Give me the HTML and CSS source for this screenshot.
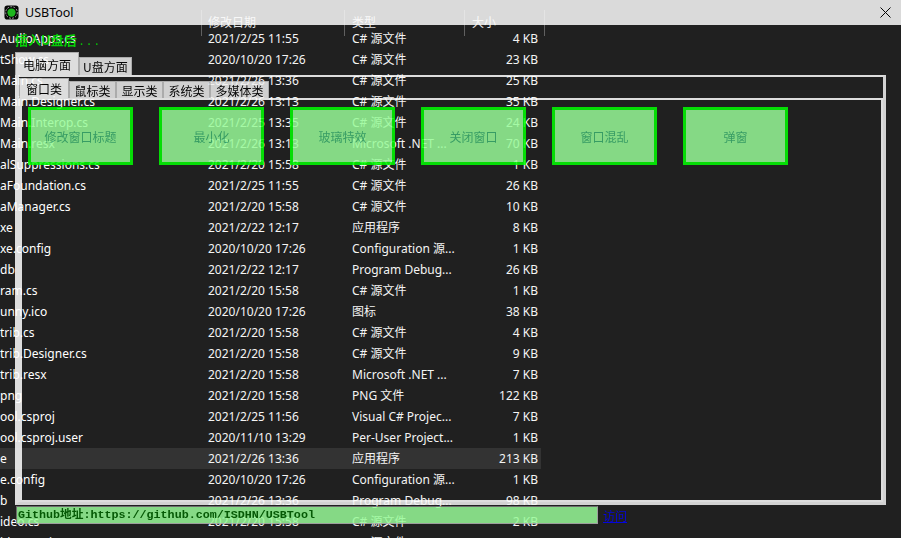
FILE: index.html
```html
<!DOCTYPE html>
<html lang="zh-CN">
<head>
<meta charset="utf-8">
<title>USBTool</title>
<link rel="stylesheet" href="styles.css">
</head>
<body>
<div class="explorer">
  <div class="head">
    <div class="hc"></div>
    <div class="hc">修改日期</div>
    <div class="hc ty">类型</div>
    <div class="hc ty">大小</div>
  </div>
  <div class="row"><span class="n">AudioApps.cs</span><span class="d">2021/2/25 11:55</span><span class="t">C# 源文件</span><span class="s">4 KB</span></div>
  <div class="row"><span class="n">tShow.cs</span><span class="d">2020/10/20 17:26</span><span class="t">C# 源文件</span><span class="s">23 KB</span></div>
  <div class="row"><span class="n">Main.cs</span><span class="d">2021/2/26 13:36</span><span class="t">C# 源文件</span><span class="s">25 KB</span></div>
  <div class="row"><span class="n">Main.Designer.cs</span><span class="d">2021/2/26 13:13</span><span class="t">C# 源文件</span><span class="s">35 KB</span></div>
  <div class="row"><span class="n">Main.Interop.cs</span><span class="d">2021/2/25 13:35</span><span class="t">C# 源文件</span><span class="s">24 KB</span></div>
  <div class="row"><span class="n">Main.resx</span><span class="d">2021/2/26 13:13</span><span class="t">Microsoft .NET ...</span><span class="s">70 KB</span></div>
  <div class="row"><span class="n">alSuppressions.cs</span><span class="d">2021/2/20 15:58</span><span class="t">C# 源文件</span><span class="s">1 KB</span></div>
  <div class="row"><span class="n">aFoundation.cs</span><span class="d">2021/2/25 11:55</span><span class="t">C# 源文件</span><span class="s">26 KB</span></div>
  <div class="row"><span class="n">aManager.cs</span><span class="d">2021/2/20 15:58</span><span class="t">C# 源文件</span><span class="s">10 KB</span></div>
  <div class="row"><span class="n">xe</span><span class="d">2021/2/22 12:17</span><span class="t">应用程序</span><span class="s">8 KB</span></div>
  <div class="row"><span class="n">xe.config</span><span class="d">2020/10/20 17:26</span><span class="t">Configuration 源...</span><span class="s">1 KB</span></div>
  <div class="row"><span class="n">db</span><span class="d">2021/2/22 12:17</span><span class="t">Program Debug...</span><span class="s">26 KB</span></div>
  <div class="row"><span class="n">ram.cs</span><span class="d">2021/2/20 15:58</span><span class="t">C# 源文件</span><span class="s">1 KB</span></div>
  <div class="row"><span class="n">unny.ico</span><span class="d">2020/10/20 17:26</span><span class="t">图标</span><span class="s">38 KB</span></div>
  <div class="row"><span class="n">trib.cs</span><span class="d">2021/2/20 15:58</span><span class="t">C# 源文件</span><span class="s">4 KB</span></div>
  <div class="row"><span class="n">trib.Designer.cs</span><span class="d">2021/2/20 15:58</span><span class="t">C# 源文件</span><span class="s">9 KB</span></div>
  <div class="row"><span class="n">trib.resx</span><span class="d">2021/2/20 15:58</span><span class="t">Microsoft .NET ...</span><span class="s">7 KB</span></div>
  <div class="row"><span class="n">png</span><span class="d">2021/2/20 15:58</span><span class="t">PNG 文件</span><span class="s">122 KB</span></div>
  <div class="row"><span class="n">ool.csproj</span><span class="d">2021/2/25 11:56</span><span class="t">Visual C# Projec...</span><span class="s">7 KB</span></div>
  <div class="row"><span class="n">ool.csproj.user</span><span class="d">2020/11/10 13:29</span><span class="t">Per-User Project...</span><span class="s">1 KB</span></div>
  <div class="row hl"><span class="n">e</span><span class="d">2021/2/26 13:36</span><span class="t">应用程序</span><span class="s">213 KB</span></div>
  <div class="row"><span class="n">e.config</span><span class="d">2020/10/20 17:26</span><span class="t">Configuration 源...</span><span class="s">1 KB</span></div>
  <div class="row"><span class="n">b</span><span class="d">2021/2/26 13:36</span><span class="t">Program Debug...</span><span class="s">98 KB</span></div>
  <div class="row"><span class="n">ideo.cs</span><span class="d">2021/2/20 15:58</span><span class="t">C# 源文件</span><span class="s">2 KB</span></div>
  <div class="row"><span class="n">ideo.Designer.cs</span><span class="d">2021/2/20 15:58</span><span class="t">C# 源文件</span><span class="s">5 KB</span></div>
</div>

<div class="app">
  <div class="titlebar">
    <svg class="appicon" viewBox="0 0 16 16" aria-hidden="true">
      <rect x="0.5" y="0.5" width="15" height="15" rx="3" fill="#000"/>
      <circle cx="8" cy="8" r="6.2" fill="none" stroke="#d0d0d0" stroke-width="1" stroke-dasharray="2 1.4"/>
      <circle cx="8" cy="8" r="4.4" fill="#1ed21e"/>
    </svg>
    <span class="title">USBTool</span>
    <svg class="close" viewBox="0 0 11 11" aria-hidden="true">
      <path d="M0.5 0.5 L10.5 10.5 M10.5 0.5 L0.5 10.5" stroke="#000" stroke-width="1" fill="none"/>
    </svg>
  </div>
  <div class="hint">插入U盘后<span class="dots">...</span></div>
  <div class="tabctl outer">
    <div class="strip">
      <div class="tab sel">电脑方面</div>
      <div class="tab">U盘方面</div>
    </div>
    <div class="frame">
      <div class="tabctl inner">
        <div class="strip">
          <div class="tab sel">窗口类</div>
          <div class="tab">鼠标类</div>
          <div class="tab">显示类</div>
          <div class="tab">系统类</div>
          <div class="tab">多媒体类</div>
        </div>
        <div class="frame">
          <div class="btns">
            <button class="btn">修改窗口标题</button>
            <button class="btn">最小化</button>
            <button class="btn">玻璃特效</button>
            <button class="btn">关闭窗口</button>
            <button class="btn">窗口混乱</button>
            <button class="btn">弹窗</button>
          </div>
        </div>
      </div>
    </div>
  </div>
  <div class="linkrow">
    <div class="url">Github地址:https://github.com/ISDHN/USBTool</div>
    <a class="visit" href="#">访问</a>
  </div>
</div>
</body>
</html>
```

FILE: styles.css
```css
html, body {
  margin: 0;
  padding: 0;
}

body {
  width: 901px;
  height: 538px;
  overflow: hidden;
  position: relative;
  background: #202020;
  font-family: "Noto Sans", "Noto Sans CJK SC", sans-serif;
}

/* ---------- background explorer list ---------- */
.explorer {
  position: absolute;
  left: 0;
  top: 0;
  width: 901px;
  height: 538px;
  box-sizing: border-box;
  padding-top: 10px;
  overflow: hidden;
  color: #f4f4f4;
  font-size: 12px;
}

.head {
  display: grid;
  grid-template-columns: 202px 143px 120px 80px;
  height: 26px;
  margin-bottom: -8px;
}

.hc {
  border-right: 1px solid #606060;
  line-height: 26px;
  padding-left: 6px;
  color: #e6e6e6;
  white-space: nowrap;
}

.hc.ty {
  padding-left: 7px;
}

.row {
  display: grid;
  grid-template-columns: 202px 143px 120px 76px;
  width: 541px;
  height: 21px;
  line-height: 21px;
  white-space: nowrap;
}

.row.hl {
  background: #333333;
}

.n {
  overflow: hidden;
  color: #ffffff;
}

.d {
  padding-left: 6px;
}

.t {
  padding-left: 7px;
  overflow: hidden;
}

.s {
  text-align: right;
  padding-right: 3px;
}

/* ---------- USBTool window (semi transparent) ---------- */
.app {
  position: absolute;
  left: 0;
  top: 0;
  width: 901px;
  height: 538px;
  opacity: 0.85;
  display: flex;
  flex-direction: column;
  font-family: "Noto Sans CJK SC", "Noto Sans", sans-serif;
  font-size: 12px;
  color: #000;
}

.titlebar {
  flex: none;
  height: 25px;
  background: #fcfcfc;
  display: flex;
  align-items: center;
}

.appicon {
  width: 15px;
  height: 15px;
  margin-left: 4px;
  margin-top: -1px;
}

.title {
  margin-left: 6px;
  font-family: "Noto Sans", sans-serif;
  font-size: 12.5px;
}

.close {
  width: 11px;
  height: 11px;
  margin-left: auto;
  margin-right: 10px;
}

.hint {
  flex: none;
  margin: 7px 0 0 15px;
  height: 16px;
  line-height: 16px;
  font-size: 13px;
  font-weight: bold;
  color: #00ee00;
  white-space: nowrap;
}

.dots {
  font-weight: normal;
  letter-spacing: 4px;
  margin-left: 3px;
}

.tabctl.outer {
  flex: none;
  margin: 4px 0 0 15px;
  width: 871px;
  height: 453px;
  display: flex;
  flex-direction: column;
}

.strip {
  flex: none;
  display: flex;
  align-items: flex-end;
}

.tab {
  box-sizing: border-box;
  background: #f0f0f0;
  border: 1px solid #c4c4c4;
  border-bottom: none;
  white-space: nowrap;
  display: flex;
  align-items: center;
  justify-content: center;
}

.tab.sel {
  background: #ffffff;
}

.outer > .strip {
  height: 23px;
}

.outer > .strip > .tab {
  height: 18px;
  padding: 0 3px;
}

.outer > .strip > .tab.sel {
  height: 23px;
  padding: 0 7px;
}

.frame {
  flex: 1;
  min-height: 0;
  display: flex;
  flex-direction: column;
  border-style: solid;
  border-color: #ffffff;
}

.outer > .frame {
  border-width: 2px 3px 3px 4px;
  border-right-color: #f2f2f2;
  border-bottom-color: #f2f2f2;
}

.tabctl.inner {
  flex: 1;
  min-height: 0;
  display: flex;
  flex-direction: column;
}

.inner > .strip {
  height: 21px;
}

.inner > .strip > .tab {
  height: 17px;
  padding: 0 4.5px;
}

.inner > .strip > .tab.sel {
  height: 20px;
  padding: 0 6px;
}

.inner > .frame {
  border-width: 2px 2px 2px 3px;
}

.btns {
  display: flex;
  gap: 26px;
  padding: 7px 0 0 6px;
}

.btn {
  flex: none;
  width: 105px;
  height: 58px;
  box-sizing: border-box;
  margin: 0;
  padding: 0;
  border: 3px solid #00ff00;
  background: #98fb98;
  color: #3cb371;
  font-family: "Noto Sans CJK SC", sans-serif;
  font-size: 12px;
  display: flex;
  align-items: center;
  justify-content: center;
}

.linkrow {
  flex: none;
  display: flex;
  align-items: center;
  margin: 1px 0 0 16px;
  height: 18px;
}

.url {
  width: 582px;
  height: 18px;
  box-sizing: border-box;
  border: 1px solid #b4b4b4;
  border-top-color: #7a7a7a;
  border-left-color: #7a7a7a;
  background: #98fb98;
  color: #006400;
  font-family: "Liberation Mono", "Noto Sans CJK SC", monospace;
  font-weight: bold;
  font-size: 11.7px;
  line-height: 16px;
  padding-left: 1px;
  white-space: nowrap;
  overflow: hidden;
}

.visit {
  margin-left: 5px;
  color: #0000ff;
  font-size: 12px;
  text-decoration: underline;
}
```
